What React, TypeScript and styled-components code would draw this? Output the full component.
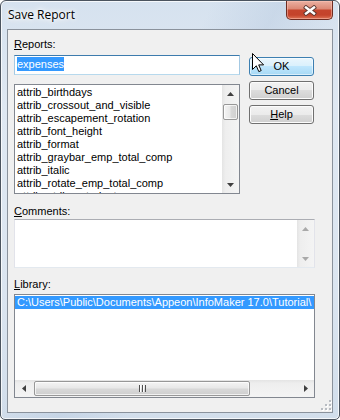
import styled, { createGlobalStyle } from 'styled-components';

const GlobalStyle = createGlobalStyle`
  html, body { margin: 0; padding: 0; }
  body {
    width: 340px;
    height: 420px;
    overflow: hidden;
    background: #ffffff;
    font-family: "Liberation Sans", Arial, sans-serif;
    font-size: 11px;
    color: #000;
  }
`;

const reportNames = [
  'attrib_birthdays',
  'attrib_crossout_and_visible',
  'attrib_escapement_rotation',
  'attrib_font_height',
  'attrib_format',
  'attrib_graybar_emp_total_comp',
  'attrib_italic',
  'attrib_rotate_emp_total_comp',
  'attrib_strikeout_dept',
];

const libraryPath = 'C:\\Users\\Public\\Documents\\Appeon\\InfoMaker 17.0\\Tutorial\\';

function Arrow({ dir, disabled }: { dir: 'up' | 'down' | 'left' | 'right'; disabled?: boolean }) {
  const fill = disabled ? '#a9a9a9' : '#3f3f3f';
  const vertical = dir === 'up' || dir === 'down';
  const points = {
    up: '0,4 3.5,0 7,4',
    down: '0,0 7,0 3.5,4',
    left: '4,0 4,7 0,3.5',
    right: '0,0 4,3.5 0,7',
  }[dir];
  return (
    <svg width={vertical ? 7 : 4} height={vertical ? 4 : 7} viewBox={vertical ? '0 0 7 4' : '0 0 4 7'}>
      <polygon points={points} fill={fill} />
    </svg>
  );
}

function CloseGlyph() {
  return (
    <svg width="14" height="11" viewBox="0 0 14 11">
      <g strokeLinecap="square">
        <line x1="3" y1="2.5" x2="11" y2="8.5" stroke="#5b3630" strokeWidth="4.2" />
        <line x1="11" y1="2.5" x2="3" y2="8.5" stroke="#5b3630" strokeWidth="4.2" />
        <line x1="3" y1="2.5" x2="11" y2="8.5" stroke="#ffffff" strokeWidth="2.4" />
        <line x1="11" y1="2.5" x2="3" y2="8.5" stroke="#ffffff" strokeWidth="2.4" />
      </g>
    </svg>
  );
}

function SizeGrip() {
  const dots = [
    [8, 0],
    [4, 4], [8, 4],
    [0, 8], [4, 8], [8, 8],
  ];
  return (
    <svg width="11" height="11" viewBox="0 0 11 11">
      {dots.map(([x, y]) => (
        <g key={`${x}-${y}`}>
          <rect x={x + 1} y={y + 1} width="2" height="2" fill="#ffffff" />
          <rect x={x} y={y} width="2" height="2" fill="#b8bcc2" />
        </g>
      ))}
    </svg>
  );
}

function Pointer() {
  return (
    <svg width="13" height="20" viewBox="0 0 13 20">
      <path
        d="M0.5 0.5 L0.5 16.5 L4.3 12.8 L6.8 18.6 L9.2 17.6 L6.7 11.9 L11.6 11.9 Z"
        fill="#ffffff"
        stroke="#000000"
        strokeWidth="1"
        strokeLinejoin="miter"
      />
    </svg>
  );
}

export default function App() {
  return (
    <>
      <GlobalStyle />
      <Window>
        <TitleBar>
          <Title>Save Report</Title>
          <CloseButton>
            <CloseGlyph />
          </CloseButton>
        </TitleBar>
        <Client>
          <TopRow>
            <LeftColumn>
              <Label>
                <Accel>R</Accel>eports:
              </Label>
              <TextBox $focused>
                <Selection>expenses</Selection>
              </TextBox>
              <ListBox $height={110} $gap={9}>
                <Rows>
                  {reportNames.map((name) => (
                    <Row key={name}>{name}</Row>
                  ))}
                </Rows>
                <VScrollBar>
                  <ArrowCell>
                    <Arrow dir="up" />
                  </ArrowCell>
                  <VTrack>
                    <VThumb />
                  </VTrack>
                  <ArrowCell>
                    <Arrow dir="down" />
                  </ArrowCell>
                </VScrollBar>
              </ListBox>
            </LeftColumn>
            <ButtonColumn>
              <Button $default>OK</Button>
              <Button>Cancel</Button>
              <Button>
                <Accel>H</Accel>elp
              </Button>
            </ButtonColumn>
          </TopRow>

          <Label $gap={11}>
            <Accel>C</Accel>omments:
          </Label>
          <TextArea>
            <TextAreaBody />
            <VScrollBar>
              <ArrowCell>
                <Arrow dir="up" disabled />
              </ArrowCell>
              <VTrack />
              <ArrowCell>
                <Arrow dir="down" disabled />
              </ArrowCell>
            </VScrollBar>
          </TextArea>

          <Label $gap={10}>
            <Accel>L</Accel>ibrary:
          </Label>
          <ListBox $height={104} $gap={3} $column>
            <Rows>
              <Row $selected>{libraryPath}</Row>
            </Rows>
            <HScrollBar>
              <ArrowCell>
                <Arrow dir="left" />
              </ArrowCell>
              <HTrack>
                <HThumb>
                  <Grip />
                </HThumb>
              </HTrack>
              <ArrowCell>
                <Arrow dir="right" />
              </ArrowCell>
            </HScrollBar>
          </ListBox>

          <GripRow>
            <SizeGrip />
          </GripRow>
        </Client>

        <CursorLayer>
          <Pointer />
        </CursorLayer>
      </Window>
    </>
  );
}

// Styled Components
const Window = styled.div`
  position: relative;
  box-sizing: border-box;
  width: 340px;
  height: 420px;
  display: flex;
  flex-direction: column;
  border: 1px solid #4b545f;
  border-radius: 6px 6px 5px 5px;
  background:
    linear-gradient(118deg, rgba(255, 255, 255, 0) 38%, rgba(176, 196, 220, 0.35) 50%, rgba(255, 255, 255, 0) 62%),
    linear-gradient(180deg, #d6e2ef 0%, #dfe8f2 25%, #dbe5f0 70%, #d2deeb 100%);
  box-shadow: inset 0 0 0 1px rgba(255, 255, 255, 0.75);
  overflow: hidden;
`;

const TitleBar = styled.div`
  flex: none;
  height: 28px;
  display: flex;
  align-items: flex-start;
  justify-content: space-between;
`;

const Title = styled.span`
  padding: 5px 0 0 7px;
  font-family: "Open Sans", "Noto Sans", sans-serif;
  font-size: 12px;
  line-height: 17px;
  color: #000;
  text-shadow: 0 0 6px #ffffff, 0 0 3px #ffffff, 0 0 10px #ffffff;
`;

const CloseButton = styled.div`
  box-sizing: border-box;
  width: 47px;
  height: 19px;
  margin-right: 6px;
  display: flex;
  align-items: center;
  justify-content: center;
  border: 1px solid #6e2c21;
  border-top: none;
  border-radius: 0 0 5px 5px;
  background: linear-gradient(180deg, #eab0a2 0%, #dc8a77 42%, #c5452d 52%, #c4432b 78%, #dd7456 100%);
  box-shadow: inset 0 0 0 1px rgba(255, 200, 185, 0.5);
`;

const Client = styled.div`
  flex: 1;
  display: flex;
  flex-direction: column;
  margin: 0 6px 6px 6px;
  padding: 8px 17px 0 6px;
  border: 1px solid #8a929c;
  background: #f0f0f0;
`;

const TopRow = styled.div`
  display: flex;
  gap: 9px;
`;

const LeftColumn = styled.div`
  width: 226px;
  display: flex;
  flex-direction: column;
`;

const Label = styled.div<{ $gap?: number }>`
  margin-top: ${(p) => p.$gap ?? 0}px;
  line-height: 13px;
  white-space: nowrap;
`;

const Accel = styled.span`
  text-decoration: underline;
`;

const TextBox = styled.div<{ $focused?: boolean }>`
  box-sizing: border-box;
  height: 20px;
  margin-top: 4px;
  padding: 1px 0 0 2px;
  background: #ffffff;
  border: 1px solid;
  border-color: ${(p) =>
    p.$focused ? '#3d7bad #a4c9e3 #b7d9ed #a4c9e3' : '#abadb3 #e2e3ea #e3e9ef #e2e3ea'};
`;

const Selection = styled.span`
  display: inline-block;
  line-height: 14px;
  background: #3399ff;
  color: #ffffff;
`;

const ListBox = styled.div<{ $height: number; $gap: number; $column?: boolean }>`
  box-sizing: border-box;
  height: ${(p) => p.$height}px;
  margin-top: ${(p) => p.$gap}px;
  display: flex;
  flex-direction: ${(p) => (p.$column ? 'column' : 'row')};
  border: 1px solid #828790;
  background: #ffffff;
  overflow: hidden;
`;

const Rows = styled.div`
  flex: 1;
  min-width: 0;
  padding-top: 1px;
  overflow: hidden;
`;

const Row = styled.div<{ $selected?: boolean }>`
  padding: 0 2px;
  line-height: 13px;
  white-space: nowrap;
  background: ${(p) => (p.$selected ? '#3399ff' : 'transparent')};
  color: ${(p) => (p.$selected ? '#ffffff' : '#000000')};
`;

const TextArea = styled.div`
  box-sizing: border-box;
  height: 49px;
  margin-top: 1px;
  display: flex;
  background: #ffffff;
  border: 1px solid;
  border-color: #abadb3 #e2e3ea #e3e9ef #e2e3ea;
`;

const TextAreaBody = styled.div`
  flex: 1;
`;

const VScrollBar = styled.div`
  flex: none;
  width: 17px;
  display: flex;
  flex-direction: column;
  background: linear-gradient(90deg, #e4e4e4 0%, #eeeeee 20%, #f4f4f4 100%);
`;

const HScrollBar = styled.div`
  flex: none;
  height: 17px;
  display: flex;
  background: linear-gradient(180deg, #e4e4e4 0%, #eeeeee 20%, #f4f4f4 100%);
`;

const ArrowCell = styled.div`
  flex: none;
  width: 17px;
  height: 17px;
  display: flex;
  align-items: center;
  justify-content: center;
`;

const VTrack = styled.div`
  flex: 1;
  display: flex;
  flex-direction: column;
`;

const VThumb = styled.div`
  box-sizing: border-box;
  width: 15px;
  height: 16px;
  margin: 2px 0 0 1px;
  border: 1px solid #979797;
  border-radius: 2px;
  background: linear-gradient(90deg, #f4f4f4 0%, #e8e8e8 45%, #d8d8d8 55%, #cfcfcf 100%);
  box-shadow: inset 0 0 0 1px rgba(255, 255, 255, 0.7);
`;

const HTrack = styled.div`
  flex: 1;
  display: flex;
  align-items: center;
`;

const HThumb = styled.div`
  box-sizing: border-box;
  width: 216px;
  height: 15px;
  margin-left: 2px;
  display: flex;
  align-items: center;
  justify-content: center;
  border: 1px solid #979797;
  border-radius: 2px;
  background: linear-gradient(180deg, #f4f4f4 0%, #e8e8e8 45%, #d8d8d8 55%, #cfcfcf 100%);
  box-shadow: inset 0 0 0 1px rgba(255, 255, 255, 0.7);
`;

const Grip = styled.div`
  width: 7px;
  height: 7px;
  background: repeating-linear-gradient(90deg, #4f4f4f 0 1px, #ffffff 1px 2px, transparent 2px 3px);
`;

const ButtonColumn = styled.div`
  width: 65px;
  padding-top: 19px;
  display: flex;
  flex-direction: column;
  gap: 5px;
`;

const Button = styled.div<{ $default?: boolean }>`
  box-sizing: border-box;
  height: 19px;
  display: flex;
  align-items: center;
  justify-content: center;
  border: 1px solid ${(p) => (p.$default ? '#3c7fb1' : '#707070')};
  border-radius: 3px;
  background: ${(p) =>
    p.$default
      ? 'linear-gradient(180deg, #eaf6fd 0%, #d9f0fc 50%, #bee6fd 50%, #a7d9f5 100%)'
      : 'linear-gradient(180deg, #f2f2f2 0%, #ebebeb 50%, #dddddd 50%, #cfcfcf 100%)'};
  box-shadow: inset 0 0 0 1px ${(p) => (p.$default ? 'rgba(255,255,255,0.55)' : '#fcfcfc')};
  line-height: 13px;
  font-weight: 400;
  color: #000;
`;

const GripRow = styled.div`
  display: flex;
  justify-content: flex-end;
  margin: 2px -17px 0 0;
`;

const CursorLayer = styled.div`
  position: absolute;
  left: 251px;
  top: 52px;
  pointer-events: none;
`;
